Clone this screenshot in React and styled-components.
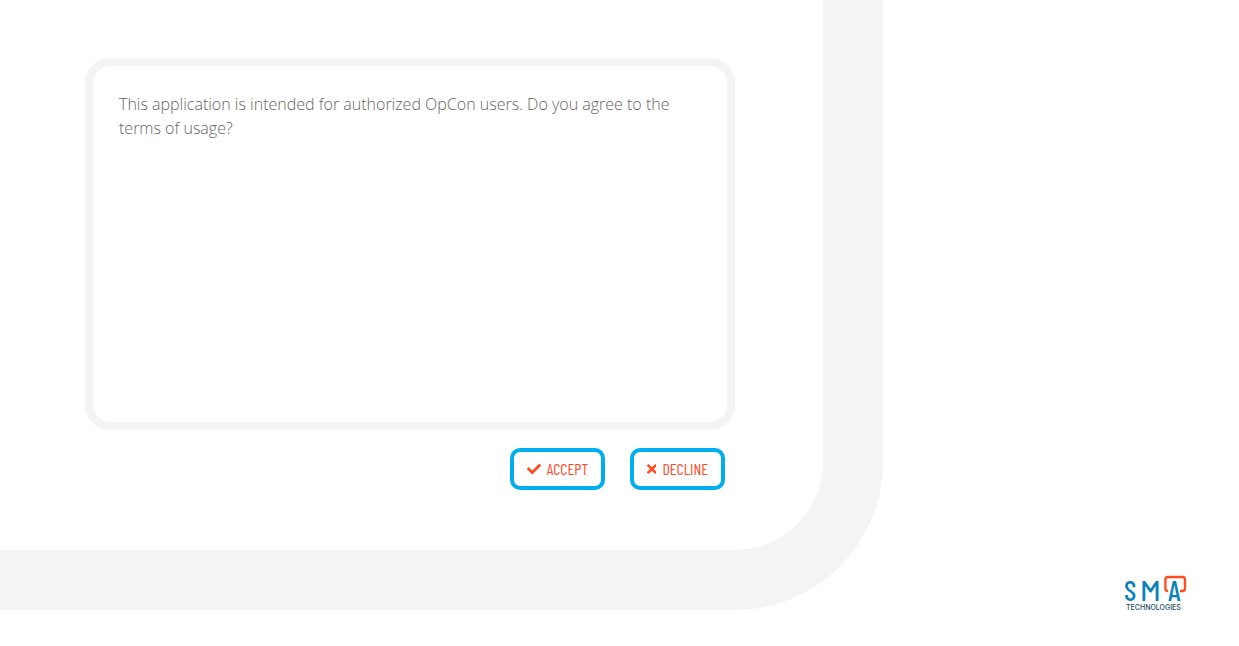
import React from "react";
import styled, { createGlobalStyle } from "styled-components";

const GlobalStyle = createGlobalStyle`
  *, *::before, *::after { box-sizing: border-box; }
  body {
    margin: 0;
    background: #fff;
    color: #666;
    font-family: "Open Sans", "Noto Sans", sans-serif;
    font-size: 16px;
    font-weight: 300;
    line-height: 24px;
  }
`;

const Page = styled.div`
  display: flex;
  align-items: flex-start;
  justify-content: space-between;
  min-height: 100vh;
`;

const Panel = styled.main`
  flex: 0 1 auto;
  min-width: 0;
  padding: 58px 88px 60px 85px;
  background: #fff;
  border: solid #f4f4f4;
  border-width: 0 60px 60px 0;
  border-bottom-right-radius: 148px;
`;

const Terms = styled.section`
  width: 650px;
  max-width: 100%;
  min-height: 372px;
  padding: 26px;
  border: 8px solid #f4f4f4;
  border-radius: 25px;
`;

const Message = styled.p`
  margin: 0;
`;

const Actions = styled.div`
  display: flex;
  flex-wrap: wrap;
  justify-content: flex-end;
  gap: 25px;
  padding: 18px 10px 0 0;
`;

const ActionButton = styled.button`
  display: inline-flex;
  align-items: center;
  justify-content: center;
  gap: 6px;
  min-width: 95px;
  height: 42px;
  padding: 0 12px;
  border: 4px solid #00aeef;
  border-radius: 10px;
  background: #fff;
  color: #ff4b1f;
  font-family: "Barlow Condensed", "Liberation Sans Narrow", sans-serif;
  font-size: 16px;
  font-weight: 400;
  line-height: 24px;
  text-transform: uppercase;
  white-space: nowrap;
  cursor: pointer;
`;

const Icon = styled.svg`
  flex: none;
  height: 14px;
  fill: currentColor;
`;

const Brand = styled.footer`
  flex: none;
  align-self: flex-end;
  padding: 0 50px 34px 24px;
`;

const Logo = styled.svg`
  display: block;
  width: 66px;
  height: 38px;
  overflow: visible;
`;

const Wordmark = styled.text`
  font-family: "Barlow Condensed", "Liberation Sans Narrow", sans-serif;
  font-size: 29px;
  font-weight: 500;
  fill: #0c82bb;
`;

const WideLetter = styled.tspan`
  font-family: Barlow, "Barlow Condensed", sans-serif;
`;

const Tagline = styled.text`
  font-family: Inter, sans-serif;
  font-size: 7px;
  font-weight: 500;
  fill: #1d4d60;
`;

function CheckIcon() {
  return (
    <Icon viewBox="0 0 512 512" aria-hidden="true">
      <path d="M173.898 439.404l-166.4-166.4c-9.997-9.997-9.997-26.206 0-36.204l36.203-36.204c9.997-9.998 26.207-9.998 36.204 0L192 312.69 432.095 72.596c9.997-9.997 26.207-9.997 36.204 0l36.203 36.204c9.997 9.997 9.997 26.206 0 36.204l-294.4 294.401c-9.998 9.997-26.207 9.997-36.204-.001z" />
    </Icon>
  );
}

function CrossIcon() {
  return (
    <Icon viewBox="0 0 352 512" aria-hidden="true">
      <path d="M242.72 256l100.07-100.07c12.28-12.28 12.28-32.19 0-44.48l-22.24-22.24c-12.28-12.28-32.19-12.28-44.48 0L176 189.28 75.93 89.21c-12.28-12.28-32.19-12.28-44.48 0L9.21 111.45c-12.28 12.28-12.28 32.19 0 44.48L109.28 256 9.21 356.07c-12.28 12.28-12.28 32.19 0 44.48l22.24 22.24c12.28 12.28 32.2 12.28 44.48 0L176 322.72l100.07 100.07c12.28 12.28 32.2 12.28 44.48 0l22.24-22.24c12.28-12.28 12.28-32.19 0-44.48L242.72 256z" />
    </Icon>
  );
}

function SmaLogo() {
  return (
    <Logo viewBox="0 0 66 38" role="img" aria-label="SMA Technologies">
      <path
        d="M45 17a2.6 2.6 0 0 1-2.6-2.6V5.6A2.6 2.6 0 0 1 45 3h14.4A2.6 2.6 0 0 1 62 5.6v8.8a2.6 2.6 0 0 1-2.6 2.6H57"
        fill="none"
        stroke="#ff4f20"
        strokeWidth="2.4"
      />
      <Wordmark y="27">
        <tspan x="1">S</tspan>
        <WideLetter x="17">M</WideLetter>
        <tspan x="45">A</tspan>
      </Wordmark>
      <Tagline x="3" y="36">TECHNOLOGIES</Tagline>
    </Logo>
  );
}

export default function App() {
  return (
    <>
      <GlobalStyle />
      <Page>
        <Panel>
          <Terms>
            <Message>
              This application is intended for authorized OpCon users. Do you agree to the terms of usage?
            </Message>
          </Terms>
          <Actions>
            <ActionButton type="button">
              <CheckIcon />
              Accept
            </ActionButton>
            <ActionButton type="button">
              <CrossIcon />
              Decline
            </ActionButton>
          </Actions>
        </Panel>
        <Brand>
          <SmaLogo />
        </Brand>
      </Page>
    </>
  );
}
